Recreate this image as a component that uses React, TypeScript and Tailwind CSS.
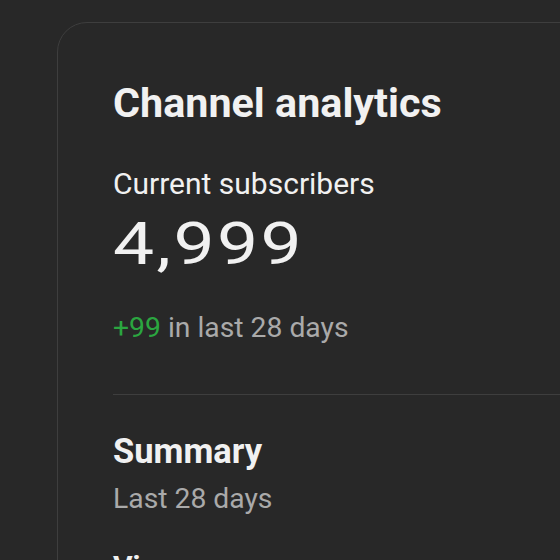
export default function App() {
  return (
    <div className="w-[560px] h-[560px] overflow-hidden bg-[#282828] pl-[57px] pt-[22px] font-['Roboto',sans-serif]">
      <div className="w-[640px] h-[700px] rounded-tl-[30px] border border-[#3e3e3e] bg-[#282828] pl-[55px] pt-[60px]">
        <h1 className="text-[41.3px] leading-none font-bold text-[#f1f1f1]">Channel analytics</h1>
        <div className="mt-[45px] text-[30px] leading-none text-[#f1f1f1]">Current subscribers</div>
        <div className="mt-[15px] text-[60px] leading-none text-[#f1f1f1] origin-left scale-x-[1.22] tracking-[2px]">4,999</div>
        <div className="mt-[40px] text-[28.3px] leading-none text-[#aaaaaa]">
          <span className="text-[#2ba640]">+99</span> in last 28 days
        </div>
        <div className="mt-[51px] h-px bg-[#3e3e3e]" />
        <h2 className="mt-[39px] text-[34.5px] leading-none font-bold text-[#f1f1f1]">Summary</h2>
        <div className="mt-[17px] text-[28.3px] leading-none text-[#aaaaaa]">Last 28 days</div>
        <div className="mt-[39px] text-[30px] leading-none font-bold text-[#f1f1f1]">Views</div>
      </div>
    </div>
  );
}
